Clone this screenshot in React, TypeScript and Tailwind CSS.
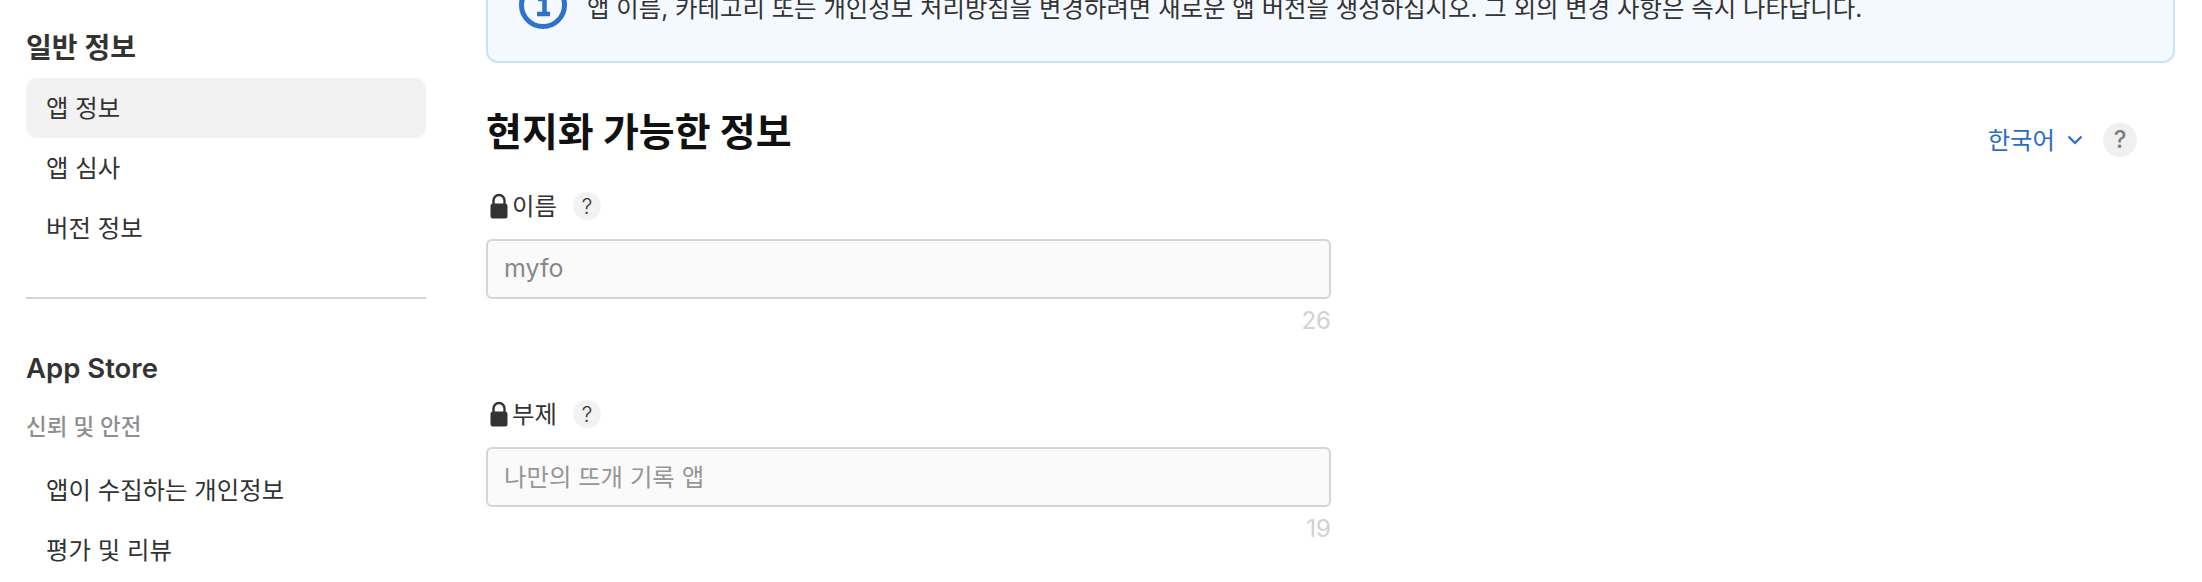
const font = {
  base: "font-['Inter','Noto_Sans_CJK_KR',sans-serif]",
};

function LockIcon() {
  return (
    <svg width="18" height="26" viewBox="0 0 18 26" className="shrink-0">
      <path
        d="M3.5 12V7.5a5.5 5.5 0 0 1 11 0V12"
        fill="none"
        stroke="#333333"
        strokeWidth="2.4"
      />
      <rect x="0.5" y="10.5" width="17" height="15" rx="2.5" fill="#333333" />
    </svg>
  );
}

function HelpDot({ size = "small" }: { size?: "small" | "large" }) {
  return size === "small" ? (
    <span className="flex h-[28px] w-[28px] items-center justify-center rounded-full bg-[#f2f2f2] text-[21px] font-light leading-none text-[#333333]">
      ?
    </span>
  ) : (
    <span className="flex h-[34px] w-[34px] items-center justify-center rounded-full bg-[#f0f0f0] text-[24px] font-medium leading-none text-[#7d7d7d]">
      ?
    </span>
  );
}

function NavItem({ label, active }: { label: string; active?: boolean }) {
  return (
    <div
      className={`flex h-[60px] items-center rounded-[10px] pl-[20px] text-[24.4px] text-[#333333] ${
        active ? "bg-[#f2f2f2]" : ""
      }`}
    >
      {label}
    </div>
  );
}

function Field({
  label,
  value,
  count,
  dim,
}: {
  label: string;
  value: string;
  count: number;
  dim?: boolean;
}) {
  return (
    <div className="w-[845px]">
      <div className="flex h-[28px] items-center pl-[4px]">
        <LockIcon />
        <span className="ml-[4px] text-[24.4px] leading-none text-[#333333]">{label}</span>
        <span className="ml-[16px]">
          <HelpDot />
        </span>
      </div>
      <div
        className={`mt-[19px] flex h-[60px] items-center rounded-[6px] border-2 border-[#d5d5d5] bg-[#fafafa] pl-[16px] ${
          dim ? "text-[24.4px] text-[#969696]" : "text-[25px] text-[#888888]"
        }`}
      >
        {value}
      </div>
      <div className="mt-[8px] h-[28px] text-right text-[24px] leading-[28px] text-[#d2d2d2]">
        {count}
      </div>
    </div>
  );
}

export default function App() {
  return (
    <div className={`${font.base} flex h-[582px] w-[2202px] overflow-hidden bg-white`}>
      {/* sidebar */}
      <aside className="ml-[26px] w-[400px] shrink-0 pt-[28px]">
        <h2 className="flex h-[40px] items-center text-[28px] font-semibold text-[#333333]">
          일반 정보
        </h2>
        <nav className="mt-[10px]">
          <NavItem label="앱 정보" active />
          <NavItem label="앱 심사" />
          <NavItem label="버전 정보" />
        </nav>
        <div className="mt-[39px] h-[2px] bg-[#d5d5d5]" />
        <h2 className="mt-[50px] flex h-[40px] items-center text-[27.5px] font-semibold text-[#333333]">
          App Store
        </h2>
        <div className="mt-[20px] flex h-[36px] items-center text-[22.5px] font-medium text-[#8f8f8f]">
          신뢰 및 안전
        </div>
        <nav className="mt-[15px]">
          <NavItem label="앱이 수집하는 개인정보" />
          <NavItem label="평가 및 리뷰" />
        </nav>
      </aside>

      {/* main */}
      <main className="ml-[60px] w-[1689px] shrink-0">
        <div className="-mt-[57px] flex h-[120px] items-start rounded-[12px] border-2 border-[#c9e2fb] bg-[#f4f9ff] pl-[31px] pt-[36px]">
          <svg width="48" height="48" viewBox="0 0 48 48" className="shrink-0">
            <circle cx="24" cy="24" r="21.5" fill="none" stroke="#2f72c9" strokeWidth="5" />
            <path
              d="M19 18h6.5v14M18 33h13"
              fill="none"
              stroke="#2f72c9"
              strokeWidth="4.5"
            />
          </svg>
          <p className="ml-[20px] mt-[11px] whitespace-nowrap text-[24.4px] leading-[32px] text-[#333333]">
            앱 이름, 카테고리 또는 개인정보 처리방침을 변경하려면 새로운 앱 버전을 생성하십시오. 그 외의 변경 사항은 즉시 나타납니다.
          </p>
        </div>

        <div className="mt-[43px] flex items-center justify-between pr-[38px]">
          <h1 className="text-[39px] font-bold leading-[52px] text-[#111111]">
            현지화 가능한 정보
          </h1>
          <div className="mt-[16px] flex items-center text-[#2b6cc4]">
            <span className="text-[24.4px] leading-none">한국어</span>
            <svg width="16" height="10" viewBox="0 0 16 10" className="ml-[12px]">
              <path d="M1.5 1.5 8 8l6.5-6.5" fill="none" stroke="currentColor" strokeWidth="2.2" />
            </svg>
            <span className="ml-[20px]">
              <HelpDot size="large" />
            </span>
          </div>
        </div>

        <div className="mt-[34px] flex flex-col gap-[65px]">
          <Field label="이름" value="myfo" count={26} />
          <Field label="부제" value="나만의 뜨개 기록 앱" count={19} dim />
        </div>
      </main>
    </div>
  );
}
